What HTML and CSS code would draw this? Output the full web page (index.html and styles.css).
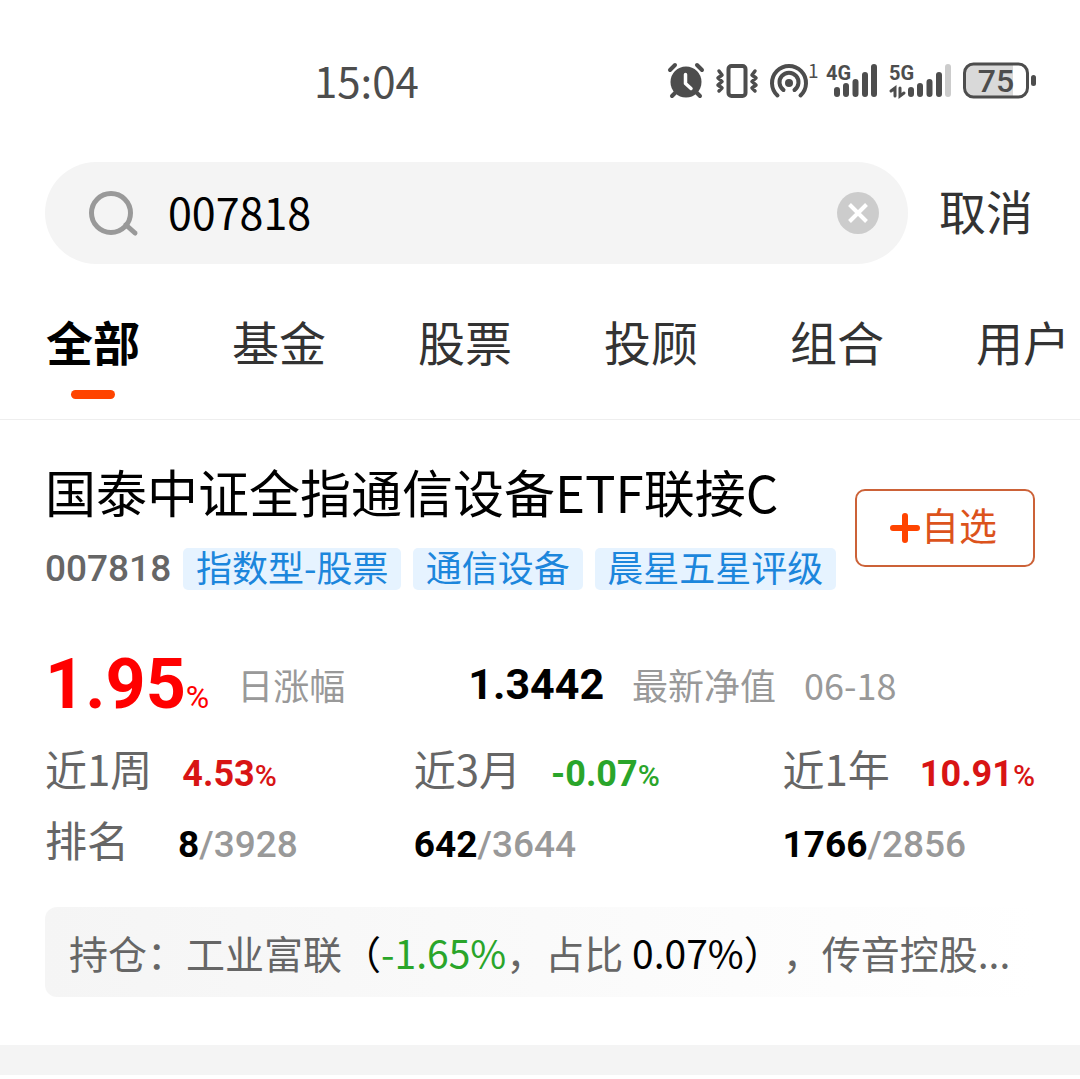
FILE: index.html
```html
<!DOCTYPE html>
<html lang="zh-CN">
<head>
    <meta charset="UTF-8">
    <meta name="viewport" content="width=device-width, initial-scale=1.0">
    <title>基金搜索</title>
    <link rel="stylesheet" href="styles.css">
</head>
<body>
    <div class="status-bar">
        <span class="time">15:04</span>
        <div class="status-icons">
            <!-- alarm -->
            <svg width="36" height="36" viewBox="0 0 36 36">
                <circle cx="18" cy="19" r="15.5" fill="#4d4d4d"/>
                <path d="M2 7l5-5M34 7l-5-5M8 29l-4 4M28 29l4 4" stroke="#4d4d4d" stroke-width="4" stroke-linecap="round"/>
                <path d="M17.500 11.500v9l5.500 5" fill="none" stroke="#fff" stroke-width="3.500" stroke-linecap="round" stroke-linejoin="round"/>
            </svg>
            <!-- vibrate -->
            <svg width="42" height="36" viewBox="0 0 42 36" fill="none" stroke="#4d4d4d" stroke-linecap="round" stroke-linejoin="round">
                <rect x="12.500" y="3" width="17" height="30" rx="3" stroke-width="4"/>
                <path d="M3 8l3 4-4 3 4 3.500-4 3.500 4 3-3 3M39 8l-3 4 4 3-4 3.500 4 3.500-4 3 3 3" stroke-width="3.500"/>
            </svg>
            <!-- hotspot -->
            <svg width="44" height="36" viewBox="0 0 44 36" fill="none" stroke="#4d4d4d" stroke-width="4" stroke-linecap="round">
                <circle cx="19" cy="20" r="4" fill="#4d4d4d" stroke="none"/>
                <path d="M13.500 27a9.500 9.500 0 1 1 11 0"/>
                <path d="M7.500 32.500a17 17 0 1 1 23 0"/>
                <text x="38" y="15" font-size="19" fill="#4d4d4d" stroke="none">1</text>
            </svg>
            <svg width="51" height="36" viewBox="0 0 51 36" stroke="#4d4d4d" stroke-width="6" stroke-linecap="round">
                <text class="net" x="0" y="17">4G</text>
                <path d="M11 27v4M20 23v8M29.500 19v12M39 12v19M48 4v27"/>
            </svg>
            <svg width="62" height="36" viewBox="0 0 62 36" stroke="#4d4d4d" stroke-width="6" stroke-linecap="round">
                <text class="net" x="0" y="17">5G</text>
                <path d="M2 28l4-3v8M11 25v8l4-3" fill="none" stroke-width="3"/>
                <path d="M22 27v4M31 23v8M40.500 19v12M50 12v19"/>
                <path d="M59 4v27" stroke="#ccc"/>
            </svg>
            <svg width="73" height="36" viewBox="0 0 73 36">
                <path d="M9 2h41v32H9q-7 0-7-7V9q0-7 7-7z" fill="#d9d9d9"/>
                <rect x="1.500" y="1" width="63" height="33" rx="9" fill="none" stroke="#4d4d4d" stroke-width="3"/>
                <rect x="68" y="12" width="5" height="11" rx="2.500" fill="#4d4d4d"/>
                <text class="charge" x="33" y="29" text-anchor="middle">75</text>
            </svg>
        </div>
    </div>

    <form class="search">
        <div class="search-box">
            <svg width="50" height="46" viewBox="0 0 50 46" fill="none" stroke="#999" stroke-width="5" stroke-linecap="round">
                <circle cx="22" cy="23" r="19.500"/>
                <path d="M37 35l9 8"/>
            </svg>
            <input type="text" value="007818" aria-label="搜索">
            <button type="button" class="clear" aria-label="清除">
                <svg width="42" height="42" viewBox="0 0 42 42">
                    <circle cx="21" cy="21" r="21" fill="#ccc"/>
                    <path d="M12.500 12.500l17 17M29.500 12.500l-17 17" stroke="#fff" stroke-width="4"/>
                </svg>
            </button>
        </div>
        <button type="button" class="cancel">取消</button>
    </form>

    <nav class="tabs">
        <a href="#" class="active">全部</a>
        <a href="#">基金</a>
        <a href="#">股票</a>
        <a href="#">投顾</a>
        <a href="#">组合</a>
        <a href="#">用户</a>
    </nav>

    <main class="fund">
        <div class="fund-head">
            <div class="fund-info">
                <h1>国泰中证全指通信设备ETF联接C</h1>
                <div class="tags">
                    <span class="code">007818</span>
                    <span class="tag">指数型-股票</span>
                    <span class="tag">通信设备</span>
                    <span class="tag">晨星五星评级</span>
                </div>
            </div>
            <button type="button" class="add">
                <svg width="32" height="32" viewBox="0 0 32 32" stroke="#ff4400" stroke-width="6" stroke-linecap="round">
                    <path d="M16 4v24M4 16h24"/>
                </svg>
                <span>自选</span>
            </button>
        </div>

        <div class="summary">
            <div class="metric">
                <span class="rate">1.95<small>%</small></span>
                <span class="note">日涨幅</span>
            </div>
            <div class="metric">
                <span class="nav-value">1.3442</span>
                <span class="note">最新净值</span>
                <span class="note">06-18</span>
            </div>
        </div>

        <div class="periods">
            <div class="cell"><span class="label">近1周</span><b class="up">4.53<small>%</small></b></div>
            <div class="cell"><span class="label">近3月</span><b class="down">-0.07<small>%</small></b></div>
            <div class="cell"><span class="label">近1年</span><b class="up">10.91<small>%</small></b></div>
            <div class="cell rank"><span class="label">排名</span><span><b>8</b>/3928</span></div>
            <div class="cell rank"><span><b>642</b>/3644</span></div>
            <div class="cell rank"><span><b>1766</b>/2856</span></div>
        </div>

        <p class="holdings">持仓：工业富联<i>（</i><span class="down">-1.65%</span>，占比 <i>0.07%）</i>，传音控股...</p>
    </main>
    <div class="divider"></div>
</body>
</html>
```

FILE: styles.css
```css
* {
    box-sizing: border-box;
}
body {
    margin: 0;
    background: #fff;
    color: #333;
    font-family: "Noto Sans CJK SC", sans-serif;
}
button, input {
    border: none;
    padding: 0;
    background: none;
    font-family: inherit;
    color: inherit;
}
svg {
    display: block;
    flex: none;
    overflow: visible;
}
a {
    color: inherit;
    text-decoration: none;
}

/* status bar */
.status-bar {
    display: flex;
    justify-content: space-between;
    align-items: center;
    height: 162px;
    padding: 0 44px 0 314px;
    color: #4d4d4d;
}
.time {
    padding-bottom: 4px;
    font-size: 42px;
}
.status-icons {
    display: flex;
    gap: 12px;
}
.net {
    font-family: Roboto, sans-serif;
    font-size: 20px;
    font-weight: bold;
    fill: #4d4d4d;
    stroke: none;
}
.charge {
    font-family: Roboto, sans-serif;
    font-size: 32px;
    font-weight: 500;
    fill: #4d4d4d;
}

/* search */
.search {
    display: flex;
    align-items: center;
    gap: 31px;
    padding: 0 47px 0 45px;
}
.search-box {
    flex: 1;
    display: flex;
    align-items: center;
    height: 102px;
    padding: 0 29px 0 44px;
    border-radius: 51px;
    background: #f4f4f4;
}
.search-box input {
    flex: 1;
    min-width: 0;
    margin-left: 29px;
    padding-bottom: 4px;
    font-size: 43px;
    color: #000;
    outline: none;
}
.cancel {
    padding-bottom: 8px;
    font-size: 47px;
}

/* tabs */
.tabs {
    display: flex;
    gap: 92px;
    height: 156px;
    padding: 42px 0 20px 46px;
    border-bottom: 1px solid #eee;
    font-size: 47px;
    line-height: 70px;
    overflow: hidden;
}
.tabs a {
    flex: none;
}
.tabs .active {
    font-weight: bold;
    color: #000;
}
.tabs .active::after {
    content: "";
    display: block;
    width: 44px;
    height: 9px;
    margin: 14px auto 0;
    border-radius: 5px;
    background: #ff4400;
}

/* fund card */
.fund {
    padding: 33px 45px 48px;
}
.fund-head {
    display: flex;
    align-items: center;
    gap: 19px;
}
.fund-info {
    flex: 1;
}
h1 {
    margin: 0;
    font-size: 51px;
    font-weight: normal;
    line-height: 76px;
    color: #000;
}
.tags {
    display: flex;
    align-items: center;
    gap: 12px;
    margin-top: 19px;
}
.code {
    font-family: Roboto, sans-serif;
    font-size: 37px;
    font-weight: 500;
    line-height: 42px;
    color: #666;
}
.tag {
    flex: auto;
    padding: 0 12px 6px;
    border-radius: 5px;
    background: #e6f3ff;
    color: #1c86dc;
    font-size: 36px;
    line-height: 36px;
    text-align: center;
    white-space: nowrap;
}
.add {
    display: flex;
    align-items: center;
    justify-content: center;
    width: 180px;
    height: 78px;
    margin-top: 12px;
    padding-right: 4px;
    border: 2px solid #cc6238;
    border-radius: 10px;
    color: #dc531c;
    font-size: 38px;
}
.add span {
    padding-bottom: 8px;
}

.summary {
    display: flex;
    gap: 123px;
    margin-top: 46px;
}
.metric {
    display: flex;
    align-items: center;
    gap: 28px;
    line-height: 96px;
}
.rate, .nav-value, .cell b, .rank {
    font-family: Roboto, sans-serif;
    font-weight: bold;
}
.rate {
    height: 96px;
    font-size: 70px;
    color: #f00;
}
.rate small {
    font-size: 32px;
    font-weight: normal;
}
.nav-value {
    font-size: 43px;
    color: #000;
}
.note {
    font-size: 36px;
    color: #999;
}

.periods {
    display: grid;
    grid-template-columns: 3fr 3fr 2fr;
    grid-auto-rows: 71px;
    align-items: baseline;
    line-height: 71px;
}
.cell {
    display: flex;
    align-items: baseline;
    gap: 30px;
    font-size: 36px;
    white-space: nowrap;
}
.rank {
    gap: 49px;
    font-size: 37px;
    font-weight: 500;
    color: #999;
}
.rank b {
    color: #000;
}
.cell small {
    font-size: 30px;
    font-weight: 500;
}
.label {
    font-family: "Noto Sans CJK SC", sans-serif;
    font-size: 42px;
    font-weight: normal;
    color: #666;
}
.up {
    color: #d81414;
}
.down {
    color: #2aa52a;
}

.holdings {
    margin: 33px 0 0;
    padding: 0 24px;
    border-radius: 12px;
    background: linear-gradient(to right, #f5f5f5, #fff);
    color: #666;
    font-size: 39px;
    line-height: 90px;
    text-spacing-trim: space-all;
    white-space: nowrap;
    overflow: hidden;
}
.holdings i {
    font-style: normal;
    color: #000;
}
.divider {
    height: 30px;
    background: #f4f4f4;
}
```
